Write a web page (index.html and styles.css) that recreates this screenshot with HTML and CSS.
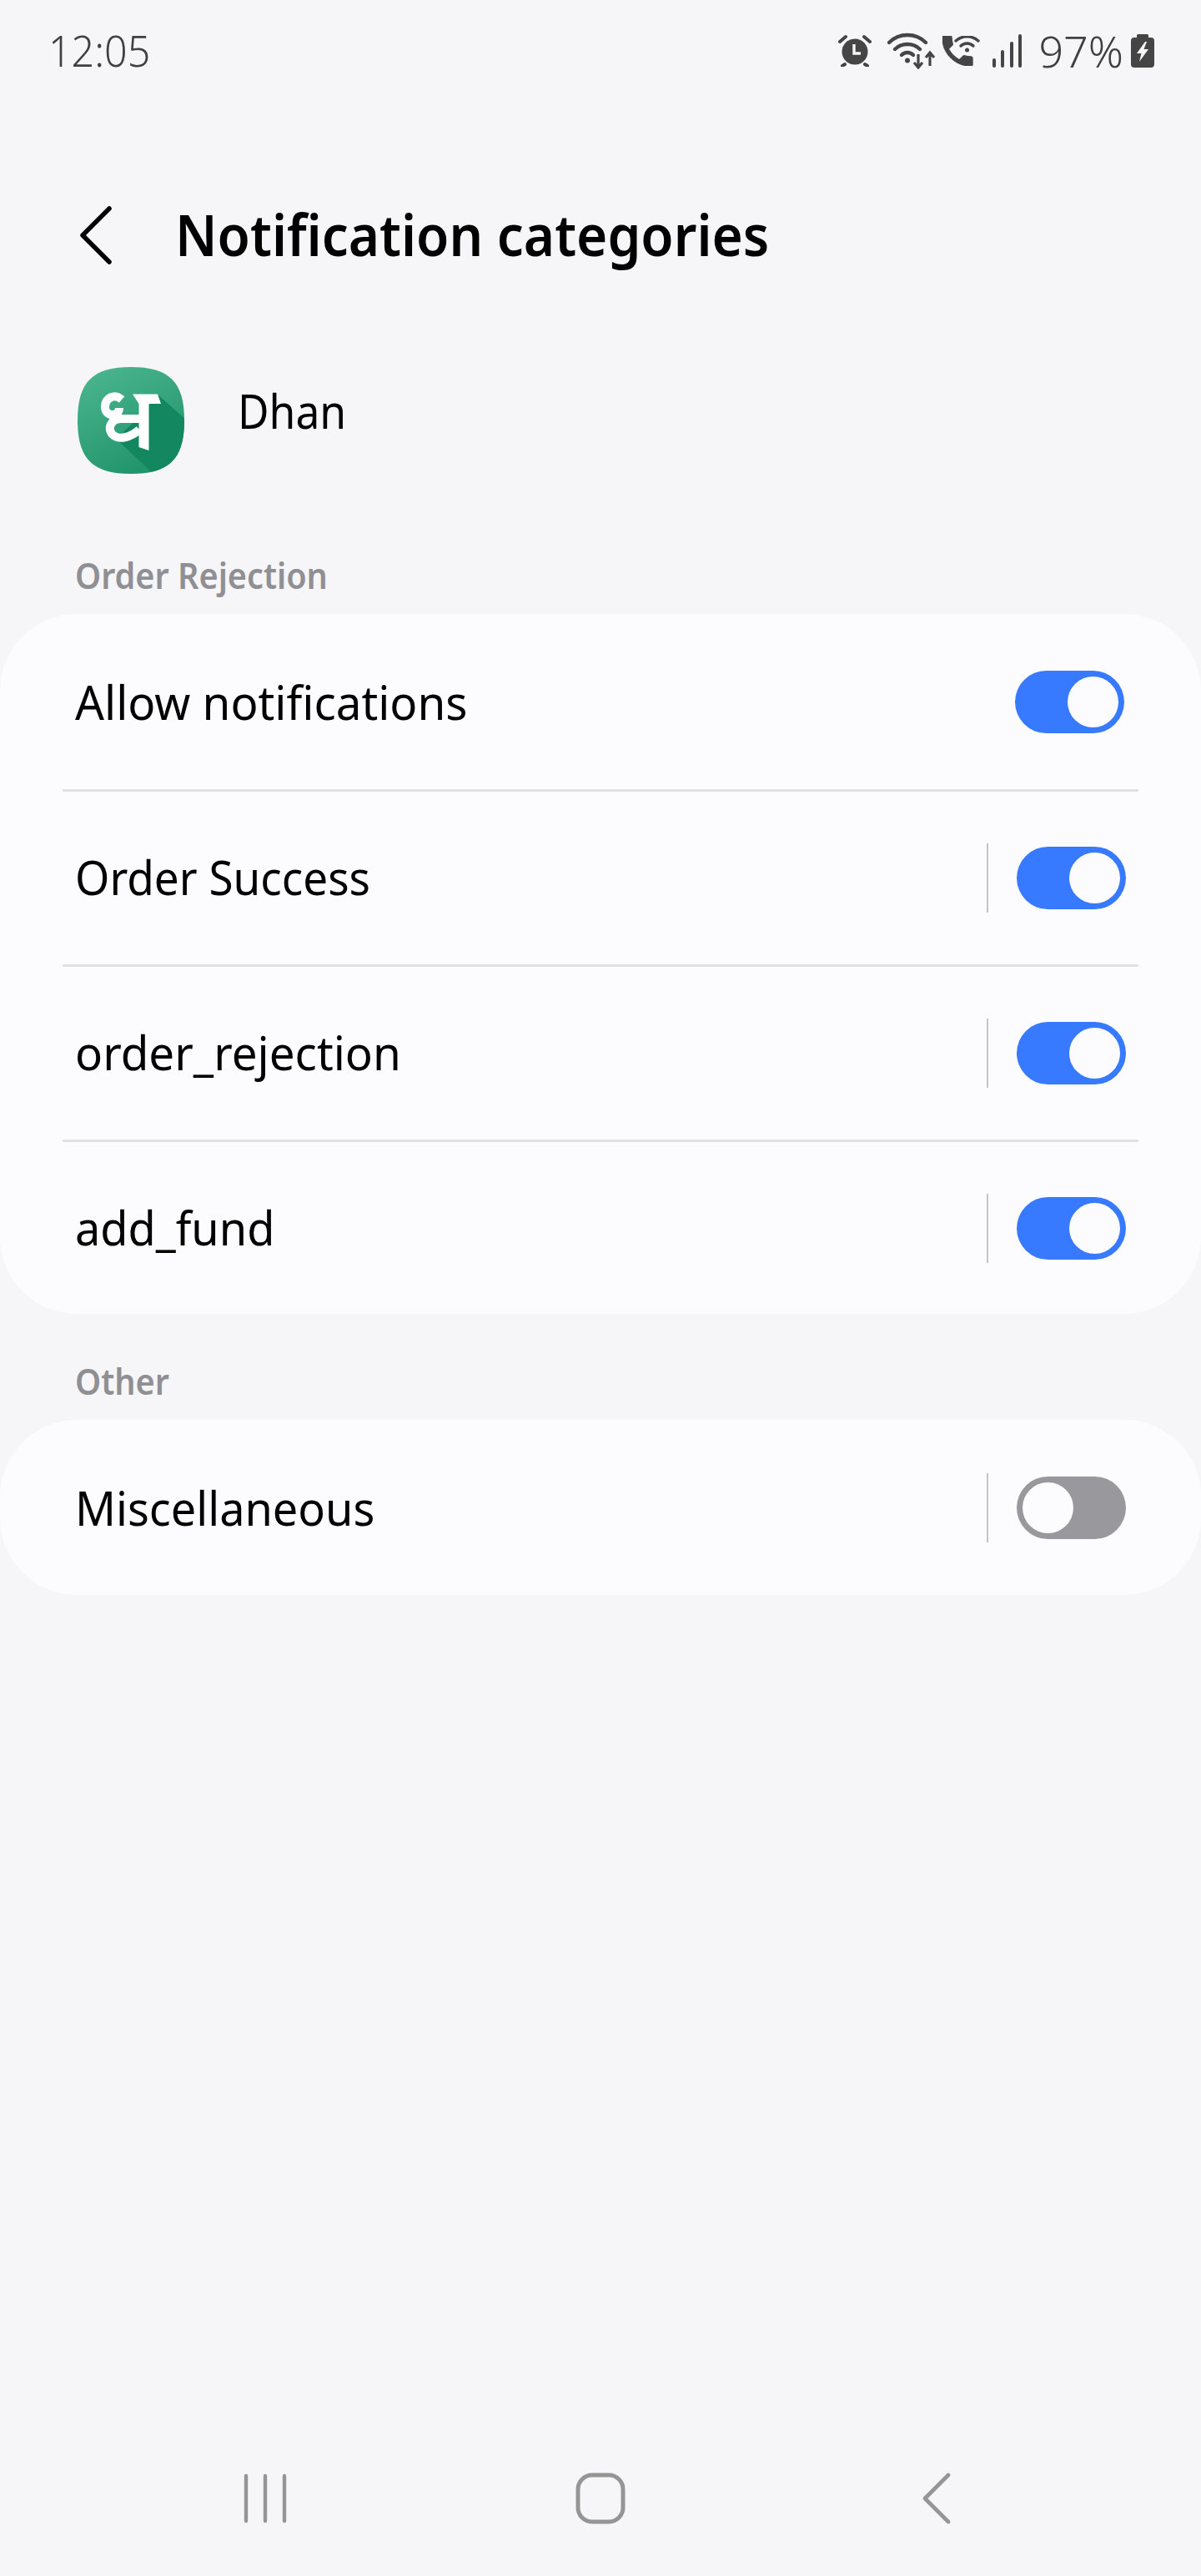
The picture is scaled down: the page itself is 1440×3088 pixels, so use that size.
FILE: index.html
```html
<!DOCTYPE html>
<html lang="en">
<head>
    <meta charset="UTF-8">
    <meta name="viewport" content="width=device-width, initial-scale=1.0">
    <title>Notification categories</title>
    <link rel="stylesheet" href="styles.css">
</head>
<body>
    <div class="page">
        <!--status bar-->
        <div class="status">
            <span class="time">12:05</span>
            <div class="status-icons">
                <svg class="ic-alarm" width="40" height="39" viewBox="0 0 40 39">
                    <circle cx="20" cy="21" r="15.5" fill="#454545"/>
                    <path d="M2 9 L9 3 M38 9 L31 3 M8 36 L5 38 M32 36 L35 38" stroke="#454545" stroke-width="4" stroke-linecap="round"/>
                    <path d="M19 12 V23 H27" fill="none" stroke="#f6f6f8" stroke-width="3.4"/>
                </svg>
                <svg class="ic-wifi" width="58" height="44" viewBox="0 0 58 44">
                    <g fill="none" stroke="#454545" stroke-width="4.400" stroke-linecap="round">
                        <path d="M2 12 C14 0 34 0 46 12"/>
                        <path d="M9 20 C17 12 31 12 39 20"/>
                        <path d="M17 27 C21 23 27 23 31 27"/>
                    </g>
                    <circle cx="24" cy="33.500" r="3" fill="#454545"/>
                    <path d="M37 26 V41 M32 36 L37 42 L42 36 M51 40 V25 M46 30 L51 24 L56 30" fill="none" stroke="#454545" stroke-width="3.200"/>
                </svg>
                <svg class="ic-call" width="45" height="36" viewBox="0 0 45 36">
                    <path transform="translate(-6 -6) scale(2)" d="M6.620 10.790c1.440 2.830 3.760 5.140 6.590 6.590l2.200-2.200c.270-.270.670-.360 1.020-.240 1.120.370 2.330.570 3.570.570.550 0 1 .450 1 1V20c0 .550-.450 1-1 1-9.390 0-17-7.610-17-17 0-.550.450-1 1-1h3.500c.550 0 1 .450 1 1 0 1.250.200 2.450.570 3.570.110.350.030.740-.250 1.020l-2.200 2.200z" fill="#454545" stroke="#454545" stroke-width="0.7"/>
                    <g fill="none" stroke="#454545" stroke-width="3.400" stroke-linecap="round">
                        <path d="M16 6 C24 -1 35 -1 43 6"/>
                        <path d="M22 12 C26 8 33 8 37 12"/>
                    </g>
                    <circle cx="29.500" cy="17" r="2.500" fill="#454545"/>
                </svg>
                <svg class="ic-signal" width="36" height="40" viewBox="0 0 36 40">
                    <g fill="#454545">
                        <rect x="0" y="29" width="4" height="11" rx="2"/>
                        <rect x="10" y="19" width="4" height="21" rx="2"/>
                        <rect x="21" y="9" width="4" height="31" rx="2"/>
                        <rect x="31" y="0" width="4" height="40" rx="2"/>
                    </g>
                </svg>
                <span class="battery-text">97%</span>
                <svg class="ic-battery" width="28" height="41" viewBox="0 0 28 41">
                    <path d="M7 5 V2.500 Q7 1 8.500 1 H19.500 Q21 1 21 2.500 V5 H24 Q28 5 28 9 V37 Q28 41 24 41 H4 Q0 41 0 37 V9 Q0 5 4 5 Z" fill="#454545"/>
                    <path d="M17 10 L7 24 H12.500 L10 34 L21 19 H15.500 L19 10 Z" fill="#f6f6f8"/>
                </svg>
            </div>
        </div>

        <!--title-->
        <div class="header">
            <svg class="back" width="38" height="70" viewBox="0 0 38 70">
                <path d="M35 3 L3 35 L35 67" fill="none" stroke="#000" stroke-width="5.500" stroke-linecap="round" stroke-linejoin="round"/>
            </svg>
            <h1 class="title">Notification categories</h1>
        </div>

        <!--app-->
        <div class="app">
            <svg class="app-icon" width="128" height="128" viewBox="0 0 128 128">
                <defs>
                    <linearGradient id="grad" x1="0.200" y1="0" x2="0.700" y2="1">
                        <stop offset="0" stop-color="#4ab58e"/>
                        <stop offset="1" stop-color="#1f9269"/>
                    </linearGradient>
                    <clipPath id="squircle">
                        <path d="M64 0 C110 0 128 18 128 64 C128 110 110 128 64 128 C18 128 0 110 0 64 C0 18 18 0 64 0 Z"/>
                    </clipPath>
                </defs>
                <g clip-path="url(#squircle)">
                    <rect width="128" height="128" fill="url(#grad)"/>
                    <path d="M96 33 L140 72 V140 H104 L46 86 L74 60 Z" fill="#138860"/>
                    <g fill="none" stroke="#fff" stroke-width="10">
                        <path d="M53 39 C44 31 33 37 33 48 C33 60 50 60 50 49"/>
                        <path d="M46 62 H74"/>
                        <path d="M52 62 C40 62 36 73 41 80 C49 89 64 84 74 75"/>
                    </g>
                    <path d="M66 32.500 H96 L100 44 H85.500 V100 L73.500 96 V44 Z" fill="#fff"/>
                </g>
            </svg>
            <span class="app-name">Dhan</span>
        </div>

        <!--categories-->
        <div class="label label-first">Order Rejection</div>
        <div class="card">
            <div class="row row-master">
                <span class="row-text text-wide">Allow notifications</span>
                <div class="toggle on"><span class="thumb"></span></div>
            </div>
            <div class="sep"></div>
            <div class="row">
                <span class="row-text text-narrow">Order Success</span>
                <span class="divider"></span>
                <div class="toggle on"><span class="thumb"></span></div>
            </div>
            <div class="sep"></div>
            <div class="row">
                <span class="row-text text-wide">order_rejection</span>
                <span class="divider"></span>
                <div class="toggle on"><span class="thumb"></span></div>
            </div>
            <div class="sep"></div>
            <div class="row">
                <span class="row-text">add_fund</span>
                <span class="divider"></span>
                <div class="toggle on"><span class="thumb"></span></div>
            </div>
        </div>

        <div class="label label-other">Other</div>
        <div class="card">
            <div class="row row-single">
                <span class="row-text">Miscellaneous</span>
                <span class="divider"></span>
                <div class="toggle"><span class="thumb"></span></div>
            </div>
        </div>

        <!--nav bar-->
        <div class="nav">
            <svg width="54" height="62" viewBox="0 0 54 62">
                <path d="M4 4 V58 M27 4 V58 M50 4 V58" stroke="#959595" stroke-width="4.400" stroke-linecap="round"/>
            </svg>
            <svg class="nav-home" width="60" height="62" viewBox="0 0 60 62">
                <rect x="3" y="3" width="54" height="56" rx="17" fill="none" stroke="#959595" stroke-width="5"/>
            </svg>
            <svg class="nav-back" width="34" height="62" viewBox="0 0 34 62">
                <path d="M31 3 L3 31 L31 59" fill="none" stroke="#959595" stroke-width="4.600" stroke-linecap="round" stroke-linejoin="round"/>
            </svg>
        </div>
    </div>
</body>
</html>
```

FILE: styles.css
```css
* {
    box-sizing: border-box;
}

body {
    margin: 0;
    background-color: #f6f6f8;
    font-family: "Noto Sans", sans-serif;
    color: #000;
}

.page {
    width: 1440px;
    height: 3088px;
    display: flex;
    flex-direction: column;
    overflow: hidden;
}

/* status bar */
.status {
    height: 121px;
    display: flex;
    align-items: center;
    justify-content: space-between;
    padding: 0 56px 0 58px;
    color: #404040;
}

.time {
    margin-bottom: 2px;
    font-size: 52px;
    font-weight: 300;
    transform: scaleX(.93);
    transform-origin: left;
}

.status-icons {
    display: flex;
    align-items: center;
}

.ic-wifi {
    margin-left: 19px;
}

.ic-call {
    margin-left: 8px;
}

.ic-signal {
    margin-left: 15px;
}

.battery-text {
    margin-left: 19px;
    margin-right: 9px;
    font-size: 52px;
    font-weight: 300;
}

/* title */
.header {
    height: 164px;
    margin-top: 79px;
    display: flex;
    align-items: center;
    padding-left: 96px;
}

.title {
    margin: 0 0 4px 76px;
    font-size: 69px;
    font-weight: 600;
    transform: scaleX(.925);
    transform-origin: left;
}

/* app row */
.app {
    margin-top: 76px;
    height: 128px;
    display: flex;
    align-items: center;
    padding-left: 93px;
}

.app-name {
    margin-left: 64px;
    margin-bottom: 24px;
    font-size: 56px;
    transform: scaleX(.92);
    transform-origin: left;
}

/* section labels */
.label {
    height: 60px;
    padding-left: 100px;
    line-height: 58px;
    font-size: 44px;
    font-weight: 600;
    color: #8f8f94;
    transform: scaleX(.9);
    transform-origin: left;
}

.label-first {
    margin-top: 92px;
    margin-bottom: 16px;
}

.label-other {
    margin-top: 51px;
    margin-bottom: 16px;
}

/* cards */
.card {
    background-color: #fcfcfe;
    border-radius: 92px;
}

.row {
    height: 207px;
    display: flex;
    align-items: center;
    padding: 0 90px 0 90px;
}

.row:last-child {
    height: 206px;
}

.row-master {
    height: 210px;
    padding-right: 92px;
}

.row.row-single {
    height: 210px;
}

.row-text {
    flex: 1;
    font-size: 56px;
    transform: scaleX(.965);
    transform-origin: left;
}

.sep + .row .row-text {
    margin-bottom: 3px;
}

.row-text.text-wide {
    transform: scaleX(.978);
}

.row-text.text-narrow {
    transform: scaleX(.947);
}

.sep {
    height: 3px;
    margin: 0 75px;
    background-color: #e1e1e4;
}

.divider {
    width: 2px;
    height: 83px;
    margin-right: 34px;
    background-color: #c4c4c7;
}

/* switches */
.toggle {
    width: 131px;
    height: 75px;
    padding: 7px;
    border-radius: 38px;
    display: flex;
    background-color: #98989d;
}

.toggle.on {
    justify-content: flex-end;
    background-color: #387aff;
}

.thumb {
    width: 61px;
    height: 61px;
    border-radius: 50%;
    background-color: #fcfcfe;
}

/* nav bar */
.nav {
    margin-top: auto;
    margin-bottom: 62px;
    display: flex;
    align-items: center;
    padding-left: 291px;
}

.nav-home {
    margin-left: 345px;
}

.nav-back {
    margin-left: 356px;
}
```
